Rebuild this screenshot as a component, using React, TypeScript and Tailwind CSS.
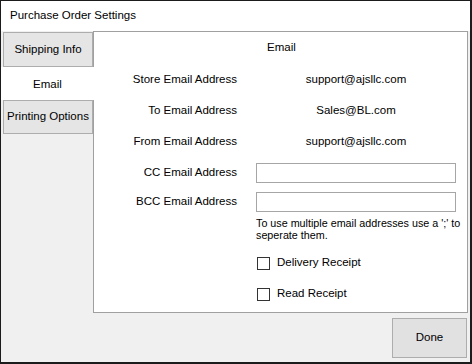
import { useState } from "react";

const rows = [
  { label: "Store Email Address", value: "support@ajsllc.com" },
  { label: "To Email Address", value: "Sales@BL.com" },
  { label: "From Email Address", value: "support@ajsllc.com" },
];

const font = { fontFamily: '"Liberation Sans", Arial, sans-serif' };

export default function App() {
  const [cc, setCc] = useState("");
  const [bcc, setBcc] = useState("");
  const [delivery, setDelivery] = useState(false);
  const [read, setRead] = useState(false);

  return (
    <div className="h-[364px] w-[472px] bg-white text-[11.5px] text-black" style={font}>
      <div className="flex h-[364px] w-[472px] flex-col border-t border-l border-r-2 border-b-2 border-[#1b1b1b]">
        {/* title bar */}
        <div className="flex h-[30px] items-center bg-white pl-[9px]">Purchase Order Settings</div>

        <div className="flex flex-1 flex-col bg-[#f0f0f0]">
          <div className="flex h-[282px]">
            {/* tabs */}
            <div className="relative z-10 -mr-px flex w-[93px] flex-col pt-[1px]">
              <div className="ml-[2px] mr-px flex h-[35px] items-center justify-center border border-[#adadad] bg-[#e5e5e5]">
                Shipping Info
              </div>
              <div className="flex h-[33px] items-center justify-center bg-white pt-[2px]">Email</div>
              <div className="ml-[2px] mr-px flex h-[34px] items-center justify-center border border-[#adadad] bg-[#e5e5e5]">
                Printing Options
              </div>
            </div>

            {/* panel */}
            <div className="mr-[2px] flex flex-1 flex-col border border-[#a0a0a0] bg-white">
              <div className="pl-[2px] pt-[7px] text-center leading-[16px]">Email</div>

              <div className="mt-[9px] grid grid-cols-[143px_200px] gap-x-[19px]">
                {rows.map((row) => (
                  <div key={row.label} className="contents">
                    <div className="flex h-[31px] items-center justify-end">{row.label}</div>
                    <div className="flex h-[31px] items-center justify-center">{row.value}</div>
                  </div>
                ))}

                <div className="flex h-[31px] items-center justify-end">CC Email Address</div>
                <div className="flex h-[31px] items-center">
                  <input
                    value={cc}
                    onChange={(e) => setCc(e.target.value)}
                    className="h-[20px] w-[201px] border border-[#a6a6a6] bg-white px-1 text-[12px] outline-none"
                  />
                </div>

                <div className="flex h-[28px] items-center justify-end">BCC Email Address</div>
                <div className="flex h-[28px] items-start pt-[4px]">
                  <input
                    value={bcc}
                    onChange={(e) => setBcc(e.target.value)}
                    className="h-[20px] w-[201px] border border-[#a6a6a6] bg-white px-1 text-[12px] outline-none"
                  />
                </div>

                <div />
                <div className="mt-[1px] whitespace-nowrap text-[10.75px] leading-[12px]">
                  To use multiple email addresses use a ';' to
                  <br />
                  seperate them.
                </div>

                <div />
                <label className="mt-[14px] flex h-[16px] items-center gap-[7px]">
                  <input
                    type="checkbox"
                    checked={delivery}
                    onChange={(e) => setDelivery(e.target.checked)}
                    className="ml-px h-[13px] w-[13px] appearance-none border border-[#333333] bg-white"
                  />
                  Delivery Receipt
                </label>

                <div />
                <label className="mt-[15px] flex h-[16px] items-center gap-[7px]">
                  <input
                    type="checkbox"
                    checked={read}
                    onChange={(e) => setRead(e.target.checked)}
                    className="ml-px h-[13px] w-[13px] appearance-none border border-[#333333] bg-white"
                  />
                  Read Receipt
                </label>
              </div>
            </div>
          </div>

          <div className="flex justify-end pt-[5px] pr-[3px]">
            <button className="h-[40px] w-[75px] border border-[#adadad] bg-[#e1e1e1] text-[11.5px]">Done</button>
          </div>
        </div>
      </div>
    </div>
  );
}
